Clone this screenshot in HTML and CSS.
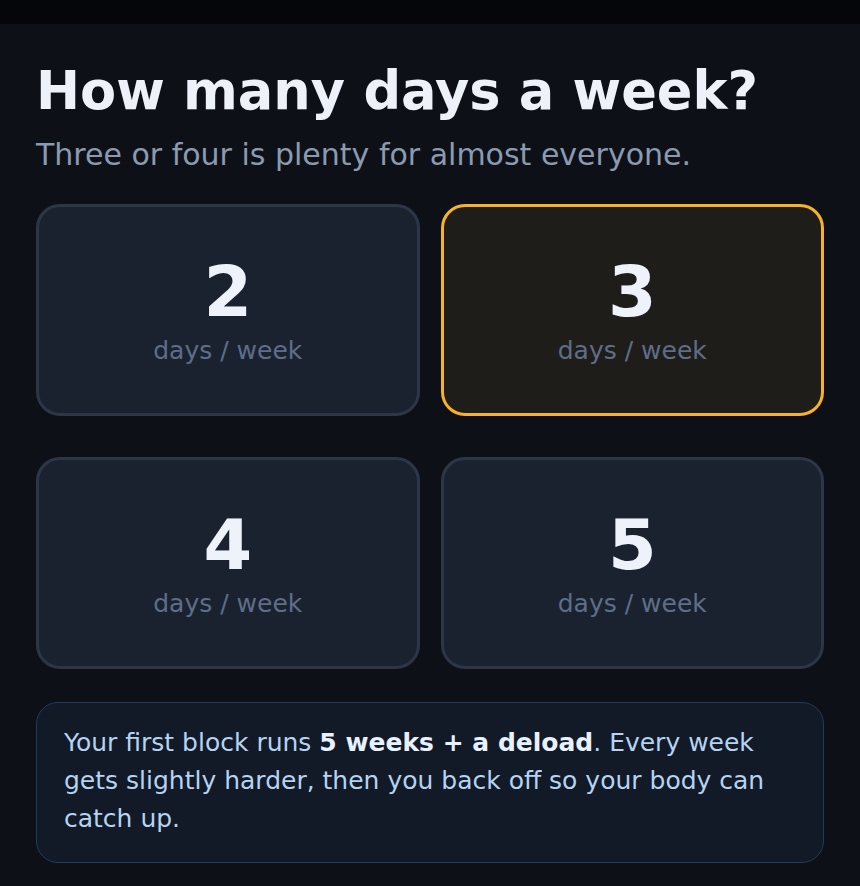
FILE: index.html
```html
<!DOCTYPE html>
<html lang="en">
<head>
<meta charset="utf-8">
<title>Days per week</title>
<link rel="stylesheet" href="styles.css">
</head>
<body>
<div class="topbar"></div>
<main class="screen">
  <h1 class="title">How many days a week?</h1>
  <p class="subtitle">Three or four is plenty for almost everyone.</p>
  <div class="options">
    <button class="option"><span class="num">2</span><span class="unit">days / week</span></button>
    <button class="option selected"><span class="num">3</span><span class="unit">days / week</span></button>
    <button class="option"><span class="num">4</span><span class="unit">days / week</span></button>
    <button class="option"><span class="num">5</span><span class="unit">days / week</span></button>
  </div>
  <div class="info">
    Your first block runs <strong>5 weeks + a deload</strong>. Every week gets slightly harder, then you back off so your body can catch up.
  </div>
</main>
</body>
</html>
```

FILE: styles.css
```css
* { box-sizing: border-box; }
html, body { margin: 0; padding: 0; background: #0d1117; }
body {
  font-family: "DejaVu Sans", "Liberation Sans", sans-serif;
  color: #eef2fa;
  min-height: 886px;
}
.topbar {
  height: 24px;
  background: #04060a;
}
.screen {
  padding: 35px 36px 0 36px;
}
.title {
  margin: 0;
  font-size: 52.6px;
  line-height: 63px;
  font-weight: 700;
  color: #edf1f9;
}
.subtitle {
  margin: 15px 0 0 0;
  font-size: 30px;
  line-height: 36px;
  color: #8c9ab0;
}
.options {
  margin-top: 31px;
  display: grid;
  grid-template-columns: 1fr 1fr;
  column-gap: 21px;
  row-gap: 41px;
}
.option {
  height: 212px;
  border: 3px solid #2c3647;
  border-radius: 24px;
  background: #1a2230;
  display: flex;
  flex-direction: column;
  align-items: center;
  justify-content: center;
  font-family: inherit;
  padding: 0;
  cursor: pointer;
}
.option.selected {
  border-color: #f7b12c;
  background: #1f1d1a;
}
.num {
  font-size: 70px;
  line-height: 76px;
  font-weight: 700;
  color: #eef2fa;
}
.unit {
  margin-top: 6px;
  font-size: 25px;
  line-height: 30px;
  color: #5e6e88;
}
.info {
  margin-top: 33px;
  border: 1.5px solid #213b5c;
  border-radius: 22px;
  background: #111a26;
  padding: 21px 26px 24px 27px;
  font-size: 25px;
  line-height: 38px;
  color: #b6d3f1;
}
.info strong {
  color: #e8f1ff;
  font-weight: 700;
}
```
